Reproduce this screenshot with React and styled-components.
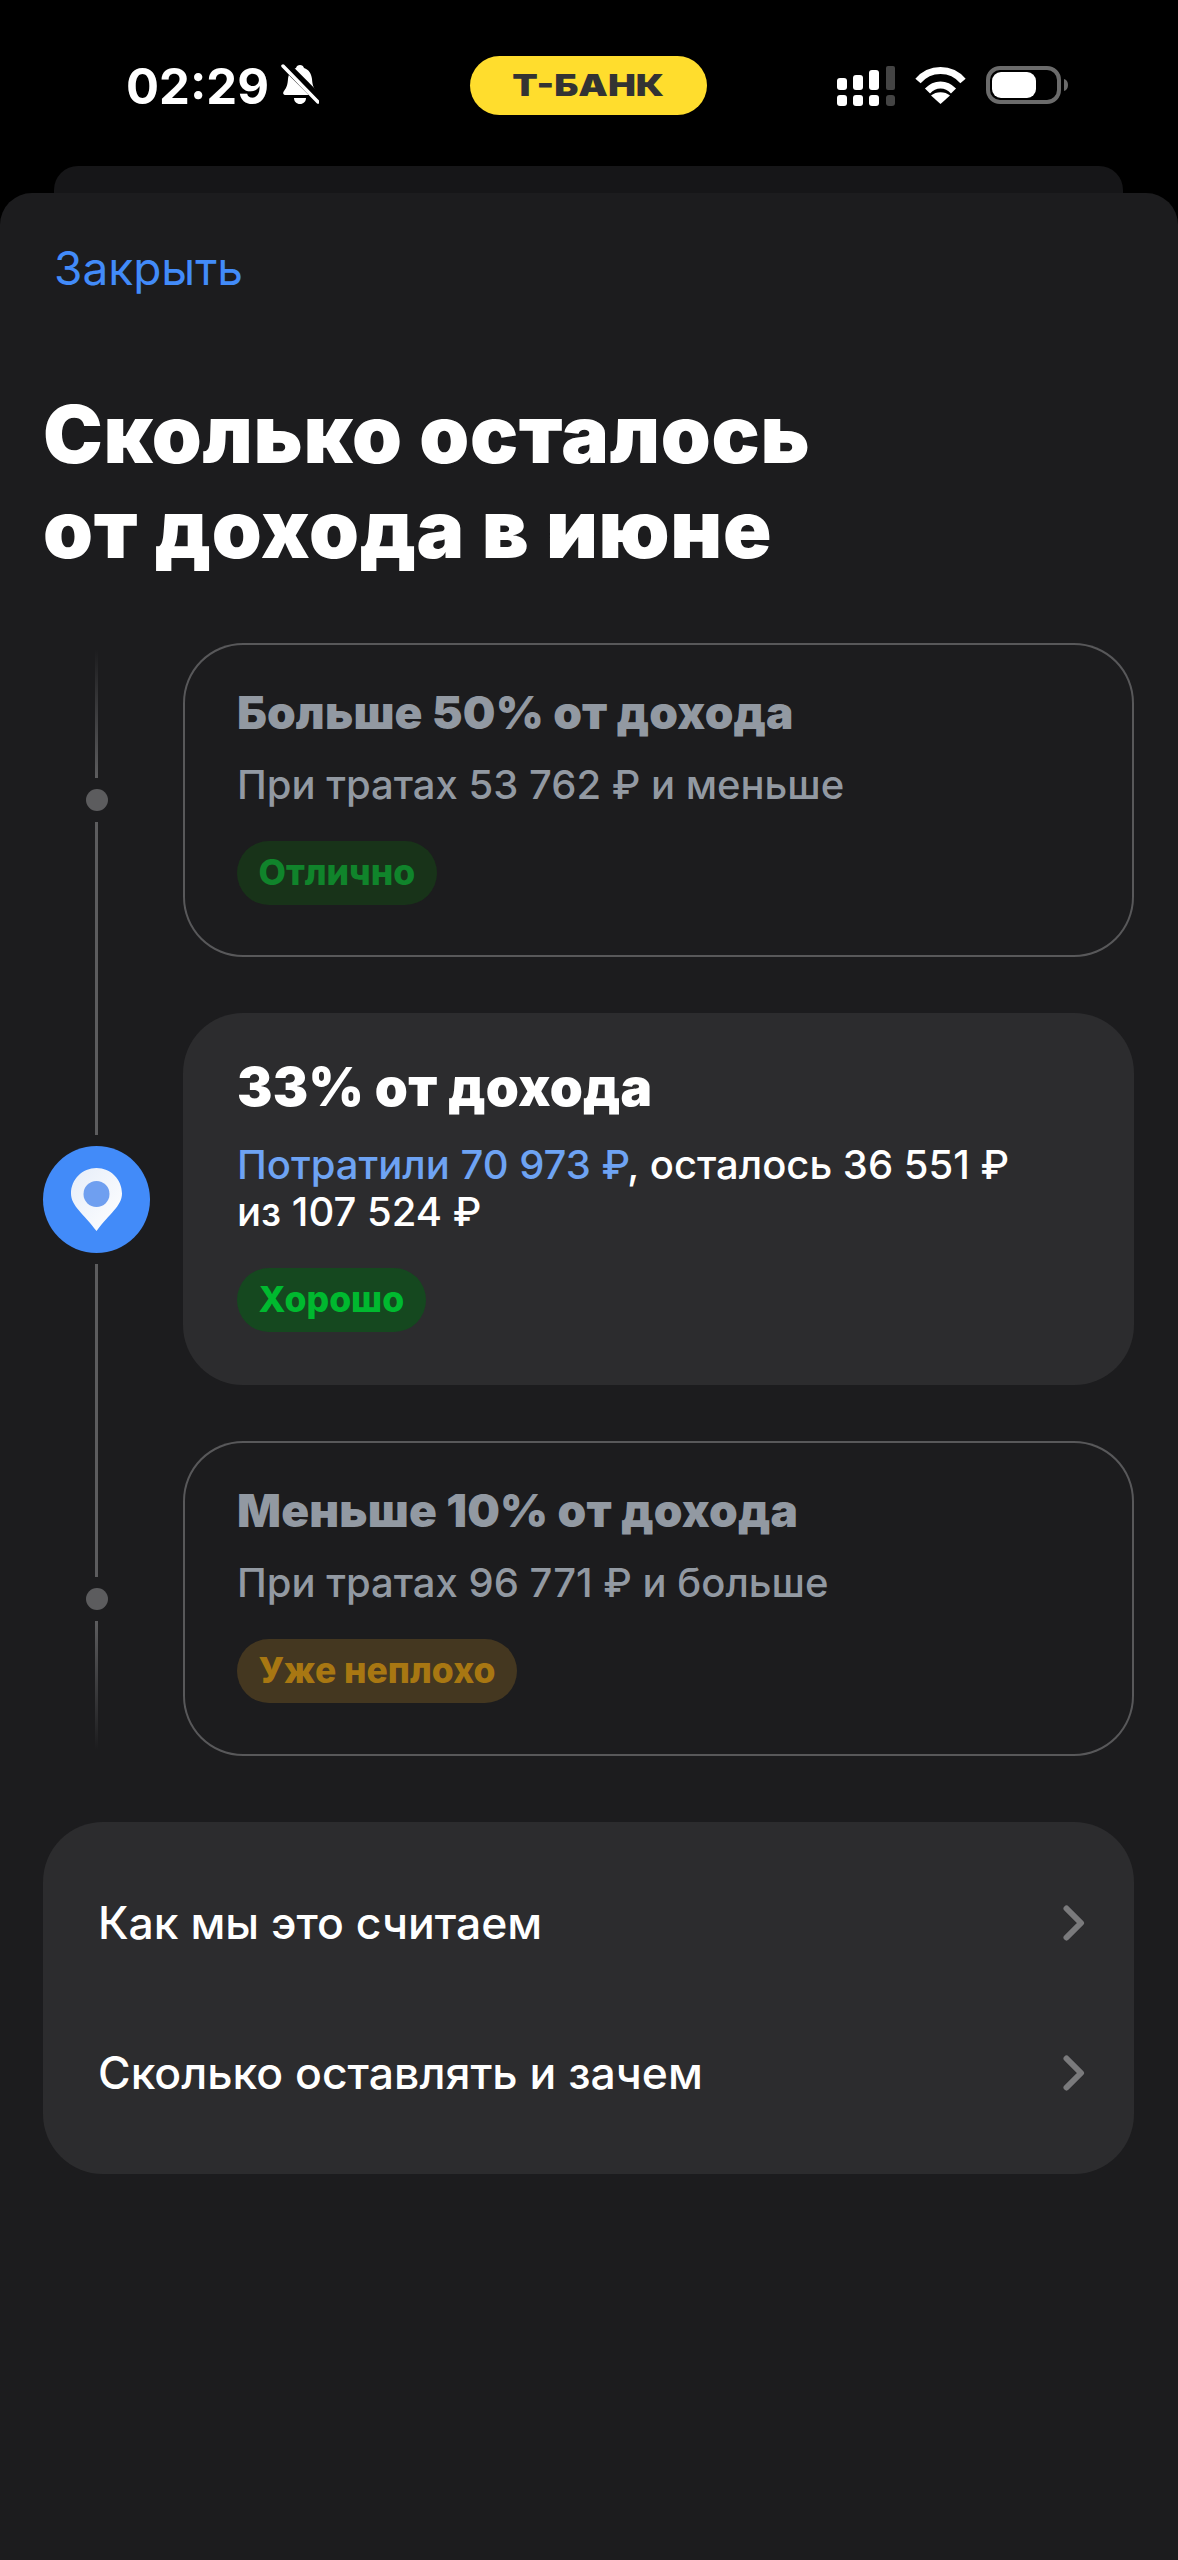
import React from 'react'
import styled, { createGlobalStyle } from 'styled-components'

const Global = createGlobalStyle`
  html, body { margin: 0; padding: 0; background: #000; }
  body { font-family: Inter, "Noto Sans", sans-serif; }
`

const Page = styled.div`
  width: 1178px;
  height: 2560px;
  overflow: hidden;
  background: #000;
`

const StatusBar = styled.div`
  height: 166px;
  display: grid;
  grid-template-columns: 470px 237px 1fr;
  box-sizing: border-box;
  padding-top: 56px;
`

const TimeBlock = styled.div`
  display: flex;
  align-items: flex-start;
  gap: 12px;
  padding: 10px 0 0 126px;
`

const Time = styled.span`
  color: #fff;
  font-size: 49px;
  font-weight: 700;
  line-height: 42px;
`

const BankPill = styled.div`
  height: 59px;
  border-radius: 30px;
  background: #ffdd2d;
  display: flex;
  align-items: center;
  justify-content: center;
`

const BankName = styled.span`
  display: inline-block;
  color: #333;
  font-size: 30px;
  font-weight: 900;
  line-height: 59px;
  transform: scaleX(1.24);
`

const Indicators = styled.div`
  display: flex;
  align-items: flex-start;
  padding: 10px 0 0 130px;
  gap: 20px;
`

const BackSheet = styled.div`
  height: 27px;
  margin: 0 55px 0 54px;
  background: #161618;
  border-radius: 24px 24px 0 0;
`

const Sheet = styled.div`
  height: 2367px;
  box-sizing: border-box;
  padding: 50px 44px 0 43px;
  background: #1c1c1e;
  border-radius: 32px 32px 0 0;
`

const CloseLink = styled.div`
  color: #428bf9;
  font-size: 46px;
  line-height: 50px;
  margin-left: 11px;
`

const Title = styled.h1`
  margin: 93px 0 67px;
  color: #fff;
  font-size: 80px;
  font-weight: 900;
  line-height: 95px;
  letter-spacing: 0.7px;
`

const Timeline = styled.div`
  display: flex;
  flex-direction: column;
  gap: 56px;
`

const Row = styled.div`
  display: grid;
  grid-template-columns: 107px 1fr;
  column-gap: 33px;
`

const Rail = styled.div`
  display: flex;
  flex-direction: column;
  align-items: center;
  margin: -28px 0;
`

const RailLine = styled.div`
  flex: 1;
  width: 3px;
  background: ${({ $fade }) =>
    $fade === 'in'
      ? 'linear-gradient(to bottom, rgba(92,92,94,0) 35px, #5c5c5e)'
      : $fade === 'out'
      ? 'linear-gradient(to top, rgba(92,92,94,0) 35px, #5c5c5e)'
      : '#5c5c5e'};
`

const Dot = styled.div`
  width: 22px;
  height: 22px;
  border-radius: 50%;
  background: #5c5c5e;
  margin: 11px 0;
`

const PinCircle = styled.div`
  width: 107px;
  height: 107px;
  border-radius: 50%;
  background: #428bf9;
  margin: 11px 0;
  display: flex;
  align-items: center;
  justify-content: center;
`

const Card = styled.div`
  box-sizing: border-box;
  padding: 44px 54px ${({ $tall }) => ($tall ? '53px' : '52px')};
  border-radius: 60px;
  background: ${({ $active }) => ($active ? '#2c2c2e' : 'transparent')};
  box-shadow: ${({ $active }) => ($active ? 'none' : 'inset 0 0 0 2px #58585a')};
`

const CardTitle = styled.div`
  color: ${({ $active }) => ($active ? '#fff' : '#9299a2')};
  font-size: ${({ $active }) => ($active ? '53px' : '46px')};
  line-height: ${({ $active }) => ($active ? '60px' : '50px')};
  letter-spacing: ${({ $active }) => ($active ? '0.25px' : '0.16px')};
  font-weight: 900;
`

const CardText = styled.div`
  margin-top: 24px;
  color: ${({ $active }) => ($active ? '#fff' : '#9299a2')};
  font-size: 40px;
  font-weight: 450;
  line-height: 47px;
`

const Spent = styled.span`
  color: #6ea3f3;
`

const Badge = styled.div`
  display: inline-block;
  margin-top: 33px;
  padding: 0 21.5px;
  height: 64px;
  line-height: 64px;
  border-radius: 32px;
  font-size: 35.5px;
  font-weight: 800;
  color: ${({ $text }) => $text};
  background: ${({ $bg }) => $bg};
  vertical-align: top;
`

const Menu = styled.div`
  margin-top: 66px;
  box-sizing: border-box;
  height: 352px;
  padding-top: 26px;
  border-radius: 60px;
  background: #2c2c2e;
`

const MenuRow = styled.div`
  height: 150px;
  display: flex;
  align-items: center;
  justify-content: space-between;
  padding: 0 49px 0 55px;
  color: #fff;
  font-size: 44.5px;
  font-weight: 450;
`

const BellIcon = () => (
  <svg width="38" height="41" viewBox="0 0 38 41" style={{ marginTop: -2 }}>
    <path
      fill="#fff"
      d="M19 1c2 0 3.500 1.200 4 3 5 1.500 7.500 6 8 11 .4 5 1 8 4 12 1.500 2 1 4-2 4H5c-3 0-3.500-2-2-4 3-4 3.600-7 4-12 .5-5 3-9.500 8-11 .5-1.800 2-3 4-3zM13 34h12c0 3.500-2.500 6-6 6s-6-2.500-6-6z"
    />
    <path d="M0 -3 L41 38" stroke="#000" strokeWidth="9" />
    <path d="M2 2 L37 38" stroke="#fff" strokeWidth="3.500" strokeLinecap="round" />
  </svg>
)

const SignalIcon = () => (
  <svg width="58" height="40" viewBox="0 0 58 40">
    <g fill="#fff">
      <rect x="0" y="12" width="10" height="12" rx="3" />
      <rect x="16" y="9" width="10" height="15" rx="3" />
      <rect x="32" y="4" width="10" height="20" rx="3" />
      <rect x="0" y="29" width="10" height="11" rx="3" />
      <rect x="16" y="29" width="10" height="11" rx="3" />
      <rect x="32" y="29" width="10" height="11" rx="3" />
    </g>
    <g fill="#444">
      <rect x="49" y="0" width="9" height="24" rx="2" />
      <rect x="49" y="29" width="9" height="11" rx="3" />
    </g>
  </svg>
)

const WifiIcon = () => (
  <svg width="51" height="38" viewBox="0 0 51 38">
    <g fill="none" stroke="#fff" strokeWidth="7">
      <path d="M3 15C15 1 36 1 48 15" />
      <path d="M12.500 25C20 17 31 17 38.500 25" />
    </g>
    <path fill="#fff" d="M16 29.500C21 25 30 25 35 29.500L25.500 38z" />
  </svg>
)

const BatteryIcon = () => (
  <svg width="82" height="38" viewBox="0 0 82 38">
    <rect x="2" y="2" width="71" height="34" rx="12" fill="none" stroke="#6b6b6b" strokeWidth="4" />
    <rect x="6" y="6" width="44" height="26" rx="9" fill="#fff" />
    <path fill="#6b6b6b" d="M78 13c2.500.5 4 3 4 6s-1.500 5.500-4 6z" />
  </svg>
)

const PinIcon = () => (
  <svg width="51" height="63" viewBox="0 0 51 63">
    <defs>
      <linearGradient id="pinFill" x1="0" y1="0" x2="1" y2="1">
        <stop offset="0" stopColor="#e6edf9" />
        <stop offset="1" stopColor="#ffffff" />
      </linearGradient>
    </defs>
    <path
      fill="url(#pinFill)"
      d="M25.500 0C39.600 0 51 11.400 51 25.500 51 38 38 46 25.500 63 13 46 0 38 0 25.500 0 11.400 11.400 0 25.500 0z"
    />
    <circle cx="25.500" cy="26" r="13" fill="#6f9ff0" />
  </svg>
)

const Chevron = () => (
  <svg width="22" height="36" viewBox="0 0 22 36">
    <path
      d="M3.500 3.500L18 18 3.500 32.500"
      fill="none"
      stroke="#7a7a7c"
      strokeWidth="6"
      strokeLinecap="round"
      strokeLinejoin="round"
    />
  </svg>
)

export default function App() {
  return (
    <Page>
      <Global />
      <StatusBar>
        <TimeBlock>
          <Time>02:29</Time>
          <BellIcon />
        </TimeBlock>
        <BankPill>
          <BankName>Т-БАНК</BankName>
        </BankPill>
        <Indicators>
          <SignalIcon />
          <WifiIcon />
          <BatteryIcon />
        </Indicators>
      </StatusBar>
      <BackSheet />
      <Sheet>
        <CloseLink>Закрыть</CloseLink>
        <Title>
          Сколько осталось
          <br />
          от дохода в июне
        </Title>
        <Timeline>
          <Row>
            <Rail>
              <RailLine $fade="in" />
              <Dot />
              <RailLine />
            </Rail>
            <Card>
              <CardTitle>Больше 50% от дохода</CardTitle>
              <CardText>При тратах 53 762 ₽ и меньше</CardText>
              <Badge $text="#10842b" $bg="#183319">Отлично</Badge>
            </Card>
          </Row>
          <Row>
            <Rail>
              <RailLine />
              <PinCircle>
                <PinIcon />
              </PinCircle>
              <RailLine />
            </Rail>
            <Card $active $tall>
              <CardTitle $active>33% от дохода</CardTitle>
              <CardText $active>
                <Spent>Потратили 70 973 ₽</Spent>, осталось 36 551 ₽
                <br />
                из 107 524 ₽
              </CardText>
              <Badge $text="#00b92f" $bg="#15481f">Хорошо</Badge>
            </Card>
          </Row>
          <Row>
            <Rail>
              <RailLine />
              <Dot />
              <RailLine $fade="out" />
            </Rail>
            <Card $tall>
              <CardTitle>Меньше 10% от дохода</CardTitle>
              <CardText>При тратах 96 771 ₽ и больше</CardText>
              <Badge $text="#a87712" $bg="#443720">Уже неплохо</Badge>
            </Card>
          </Row>
        </Timeline>
        <Menu>
          <MenuRow>
            Как мы это считаем
            <Chevron />
          </MenuRow>
          <MenuRow>
            Сколько оставлять и зачем
            <Chevron />
          </MenuRow>
        </Menu>
      </Sheet>
    </Page>
  )
}
